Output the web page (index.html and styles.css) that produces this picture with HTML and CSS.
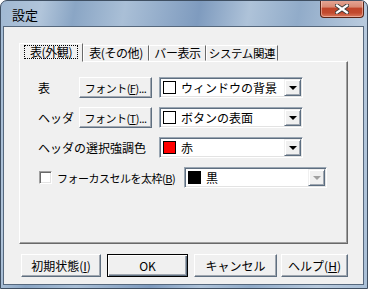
FILE: index.html
```html
<!DOCTYPE html>
<html lang="ja">
<head>
<meta charset="utf-8">
<link rel="stylesheet" href="styles.css">
</head>
<body>
<div class="window">
  <div class="titlebar">
    <span class="title">設定</span>
    <div class="close">
      <svg width="14" height="10" viewBox="0 0 14 10">
        <path d="M2 1.5 L12 8.5 M12 1.5 L2 8.5" stroke="#3a3a3a" stroke-width="4" stroke-linecap="square" fill="none"/>
        <path d="M2 1.5 L12 8.5 M12 1.5 L2 8.5" stroke="#ffffff" stroke-width="2.2" stroke-linecap="square" fill="none"/>
      </svg>
    </div>
  </div>
  <div class="client">
    <div class="tabs">
      <div class="tab active t1"><span class="focus">表(外観)</span></div>
      <div class="tab t2">表(その他)</div>
      <div class="tab t3">バー表示</div>
      <div class="tab t4">システム関連</div>
    </div>
    <div class="panel">
      <div class="row">
        <span class="label l-short">表</span>
        <div class="btn font-btn">フォント(<u>F</u>)...</div>
        <div class="combo"><span class="swatch"></span><span class="ctext">ウィンドウの背景</span><span class="drop"><i class="arrow"></i></span></div>
      </div>
      <div class="row">
        <span class="label l-short">ヘッダ</span>
        <div class="btn font-btn">フォント(<u>T</u>)...</div>
        <div class="combo"><span class="swatch"></span><span class="ctext">ボタンの表面</span><span class="drop"><i class="arrow"></i></span></div>
      </div>
      <div class="row">
        <span class="label l-long">ヘッダの選択強調色</span>
        <div class="combo"><span class="swatch red"></span><span class="ctext">赤</span><span class="drop"><i class="arrow"></i></span></div>
      </div>
      <div class="row">
        <span class="label l-check"><span class="checkbox"></span><span class="cktext">フォーカスセルを太枠(<u>B</u>)</span></span>
        <div class="combo disabled"><span class="swatch black"></span><span class="ctext">黒</span><span class="drop"><i class="arrow"></i></span></div>
      </div>
    </div>
    <div class="buttons">
      <div class="btn b-reset">初期状態(<u>I</u>)</div>
      <div class="btn b-ok">OK</div>
      <div class="btn b-cancel">キャンセル</div>
      <div class="btn b-help">ヘルプ(<u>H</u>)</div>
    </div>
  </div>
</div>
</body>
</html>
```
FILE: styles.css
```css
* { box-sizing: border-box; }

body {
  margin: 0;
  font: 12px "Noto Sans CJK JP", "Noto Sans", sans-serif;
  color: #000;
  background: #fff;
}

.window {
  width: 368px;
  height: 289px;
  display: flex;
  flex-direction: column;
  padding: 0 3px 3px 2px;
  border: 1px solid #3f4f62;
  border-radius: 7px 7px 0 0;
  background:
    linear-gradient(100deg,
      rgba(255,255,255,0.00) 0%,
      rgba(255,255,255,0.18) 10%,
      rgba(60,100,150,0.22) 18%,
      rgba(255,255,255,0.10) 30%,
      rgba(40,80,140,0.28) 48%,
      rgba(255,255,255,0.15) 60%,
      rgba(60,100,150,0.15) 72%,
      rgba(255,255,255,0.25) 88%,
      rgba(255,255,255,0.10) 100%),
    #a0b8d2;
  overflow: hidden;
}

.titlebar {
  height: 25px;
  display: flex;
  justify-content: space-between;
  align-items: flex-start;
  flex: none;
}

.title {
  margin: 6px 0 0 9px;
  font-size: 13px;
  color: #000;
  line-height: 16px;
}

.close {
  width: 44px;
  height: 18px;
  margin: -1px 0 0 0;
  border: 1px solid #5a2416;
  border-top: none;
  border-radius: 0 0 4px 4px;
  background: linear-gradient(#e6a898 0%, #d98a74 40%, #c0452a 50%, #c24a2e 75%, #d9785c 100%);
  display: flex;
  align-items: center;
  justify-content: center;
  box-shadow: inset 0 0 0 1px rgba(255,220,210,0.5);
}

.client {
  flex: 1;
  background: #f0f0f0;
  border: 1px solid #56687d;
  padding: 16px 15px 0 15px;
  display: flex;
  flex-direction: column;
}

.tabs {
  display: flex;
  align-items: flex-end;
  height: 18px;
  flex: none;
  position: relative;
  z-index: 1;
}

.tab {
  height: 16px;
  border: 1px solid;
  border-color: #ffffff #696969 transparent #ffffff;
  display: flex;
  align-items: center;
  justify-content: center;
  line-height: 14px;
  white-space: nowrap;
  background: #f0f0f0;
  letter-spacing: -0.4px;
}

.tab.active {
  height: 19px;
  margin-bottom: -1px;
  padding-bottom: 1px;
}

.t1 { width: 64px; }
.t2 { width: 66px; }
.t3 { width: 57px; }
.t4 { width: 72px; font-size: 11.5px; }

.focus {
  outline: 1px dotted #000;
  outline-offset: 0;
  padding: 0 5px;
  line-height: 12px;
}

.panel {
  height: 183px;
  border: 1px solid;
  border-color: #ffffff #696969 #696969 #ffffff;
  box-shadow: inset -1px -1px #a0a0a0;
  padding: 15px 0 0 18px;
  display: flex;
  flex-direction: column;
  gap: 9px;
  flex: none;
}

.row {
  display: flex;
  align-items: center;
  height: 21px;
}

.label { white-space: nowrap; flex: none; }
.l-short { width: 41px; }
.l-long { width: 121px; }
.l-check { width: 146px; display: flex; align-items: center; }

.checkbox {
  width: 13px;
  height: 13px;
  margin-left: 1px;
  flex: none;
  background: #fff;
  border: 1px solid;
  border-color: #a0a0a0 #ffffff #ffffff #a0a0a0;
  box-shadow: inset 1px 1px #696969, inset -1px -1px #e3e3e3;
}

.cktext {
  margin-left: 5px;
  font-size: 11px;
  letter-spacing: -0.5px;
}

.btn {
  display: flex;
  align-items: center;
  justify-content: center;
  background: #f0f0f0;
  border: 1px solid;
  border-color: #ffffff #5f6f80 #5f6f80 #ffffff;
  box-shadow: inset -1px -1px #a0a7b0;
  white-space: nowrap;
  flex: none;
}

.font-btn {
  width: 73px;
  height: 21px;
  margin-right: 7px;
  font-size: 11px;
  letter-spacing: -0.5px;
}

.combo {
  width: 144px;
  height: 21px;
  background: #fff;
  border: 1px solid;
  border-color: #9aa6b2 #ffffff #ffffff #9aa6b2;
  box-shadow: inset 1px 1px #5e6e80, inset -1px -1px #e3e3e3;
  display: flex;
  align-items: center;
  padding: 0 1px 0 3px;
  flex: none;
}

.combo.disabled { width: 143px; }

.swatch {
  width: 13px;
  height: 13px;
  border: 1px solid #000;
  background: #fff;
  flex: none;
}
.swatch.red { background: #ff0000; }
.swatch.black { background: #000; }

.ctext { margin-left: 5px; white-space: nowrap; }

.drop {
  margin-left: auto;
  width: 17px;
  height: 17px;
  background: #f0f0f0;
  border: 1px solid;
  border-color: #f0f0f0 #5b6d80 #5b6d80 #f0f0f0;
  box-shadow: inset 1px 1px #ffffff, inset -1px -1px #a0a7b0;
  display: flex;
  align-items: center;
  justify-content: center;
  flex: none;
}

.arrow {
  width: 0;
  height: 0;
  border-left: 4px solid transparent;
  border-right: 4px solid transparent;
  border-top: 4px solid #000;
  margin-top: 1px;
}

.disabled .arrow { border-top-color: #a0a0a0; }

.buttons {
  display: flex;
  margin-top: 10px;
  height: 23px;
  flex: none;
}

.buttons .btn { height: 23px; }

.b-reset { width: 80px; margin-left: 2px; }
.b-ok {
  width: 81px;
  margin-left: 6px;
  border: 1px solid #000;
  box-shadow: inset 1px 1px #ffffff, inset -1px -1px #5f6f80, inset -2px -2px #a0a7b0;
}
.b-cancel { width: 83px; margin-left: 6px; }
.b-help { width: 67px; margin-left: 4px; }

u { text-decoration: underline; text-underline-offset: 1px; }
```
